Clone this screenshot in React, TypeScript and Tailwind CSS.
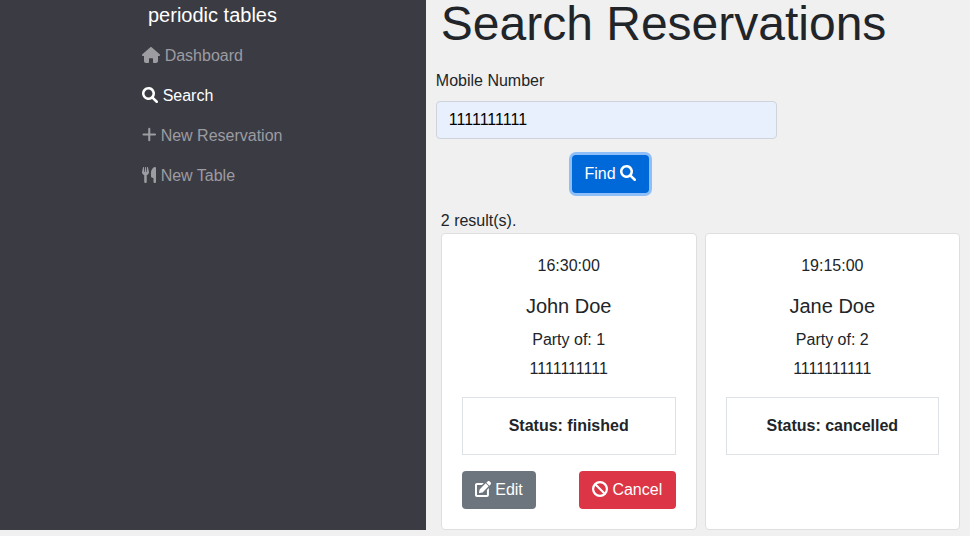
import type { ReactNode } from "react";

function Glyph({ box, className, children }: { box: string; className: string; children: ReactNode }) {
  return (
    <svg viewBox={box} fill="currentColor" aria-hidden="true" className={`inline-block align-[-2px] ${className}`}>
      {children}
    </svg>
  );
}

const HouseIcon = () => (
  <Glyph box="0 0 576 512" className="h-4 w-[18px]">
    <path d="M309 8c-12-10-30-10-42 0L11 232c-22 20-8 56 21 56h32v160c0 35 29 64 64 64h64c18 0 32-14 32-32V376c0-9 7-16 16-16h96c9 0 16 7 16 16v104c0 18 14 32 32 32h64c35 0 64-29 64-64V288h32c29 0 43-36 21-56z" />
  </Glyph>
);

const SearchIcon = () => (
  <Glyph box="0 0 512 512" className="size-4">
    <path d="M500.3 443.7l-119.7-119.7c27.22-40.41 40.65-90.9 33.46-144.7C401.8 87.79 326.8 13.32 235.2 1.723C99.01-15.51-15.51 99.01 1.724 235.2c11.6 91.64 86.08 166.7 177.6 178.9c53.8 7.189 104.3-6.236 144.7-33.46l119.7 119.7c15.62 15.62 40.95 15.62 56.57 0C515.9 484.7 515.9 459.3 500.3 443.7zM79.1 208c0-70.58 57.42-128 128-128s128 57.42 128 128c0 70.58-57.42 128-128 128S79.1 278.6 79.1 208z" />
  </Glyph>
);

const PlusIcon = () => (
  <Glyph box="0 0 448 512" className="h-4 w-3.5">
    <path d="M48 240h368M232 56v368" fill="none" stroke="currentColor" strokeWidth="66" strokeLinecap="round" />
  </Glyph>
);

const UtensilsIcon = () => (
  <Glyph box="0 0 448 512" className="h-4 w-3.5">
    <path d="M221.6 148.7C224.7 161.3 224.8 174.5 222.1 187.2C219.3 199.1 213.6 211.9 205.6 222.1C191.1 238.6 173 249.1 151.1 254.1V472C151.1 482.6 147.8 492.8 140.3 500.3C132.8 507.8 122.6 512 111.1 512C101.4 512 91.22 507.8 83.71 500.3C76.21 492.8 71.1 482.6 71.1 472V254.1C50.96 250.1 31.96 238.9 18.3 222.4C10.19 212.2 4.529 200.3 1.755 187.5C-1.019 174.7-.8315 161.5 2.303 148.8L32.51 12.45C33.36 8.598 35.61 5.197 38.82 2.9C42.02 .602 45.97-.4297 49.89 .0026C53.82 .4302 57.46 2.303 60.1 5.259C62.74 8.214 64.18 12.04 64.16 16V160H81.53L98.62 11.91C99.02 8.635 100.6 5.621 103.1 3.434C105.5 1.248 108.7 .0401 111.1 .0401C115.3 .0401 118.5 1.248 120.9 3.434C123.4 5.621 124.1 8.635 125.4 11.91L142.5 160H159.1V16C159.1 12.07 161.4 8.268 163.1 5.317C166.6 2.366 170.2 .474 174.1 .0026C178-.4262 181.1 .619 185.2 2.936C188.4 5.253 190.6 8.677 191.5 12.55L221.6 148.7zM448 472C448 482.6 443.8 492.8 436.3 500.3C428.8 507.8 418.6 512 408 512C397.4 512 387.2 507.8 379.7 500.3C372.2 492.8 368 482.6 368 472V352H351.2C342.8 352 334.4 350.3 326.6 347.1C318.9 343.8 311.8 339.1 305.8 333.1C299.9 327.1 295.2 320 291.1 312.2C288.8 304.4 287.2 296 287.2 287.6L287.1 173.8C288 136.9 299.1 100.8 319.8 70.28C340.5 39.71 369.8 16.05 404.1 2.339C408.1 .401 414.2-.3202 419.4 .2391C424.6 .7982 429.6 2.62 433.9 5.546C438.2 8.472 441.8 12.41 444.2 17.03C446.7 21.64 447.1 26.78 448 32V472z" />
  </Glyph>
);

const EditIcon = () => (
  <Glyph box="0 0 512 512" className="size-4">
    <path d="M383.1 448H63.1V128h156.1l64-64H63.1C28.65 64 0 92.65 0 128v320c0 35.35 28.65 64 63.1 64h319.1c35.34 0 63.1-28.65 63.1-64l-.0039-220.1l-63.1 63.99V448zM497.9 42.19l-28.13-28.14c-18.75-18.75-49.16-18.75-67.91 0l-38.62 38.63l96.03 96.03l38.62-38.63C516.7 91.33 516.7 60.94 497.9 42.19zM147.3 274.4l-19.04 95.22c-1.678 8.394 5.725 15.8 14.12 14.12l95.23-19.04c4.646-.9297 8.912-3.213 12.26-6.562l186.8-186.8l-96.03-96.03L153.8 262.2C150.5 265.5 148.2 269.8 147.3 274.4z" />
  </Glyph>
);

const BanIcon = () => (
  <Glyph box="0 0 512 512" className="size-4">
    <g fill="none" stroke="currentColor" strokeWidth="70">
      <circle cx="256" cy="256" r="221" />
      <path d="M104 104l304 304" />
    </g>
  </Glyph>
);

const links = [
  { label: "Dashboard", Icon: HouseIcon, active: false },
  { label: "Search", Icon: SearchIcon, active: true },
  { label: "New Reservation", Icon: PlusIcon, active: false },
  { label: "New Table", Icon: UtensilsIcon, active: false },
];

const reservations = [
  { time: "16:30:00", name: "John Doe", people: 1, phone: "1111111111", status: "finished", actions: true },
  { time: "19:15:00", name: "Jane Doe", people: 2, phone: "1111111111", status: "cancelled", actions: false },
];

function Sidebar() {
  return (
    <aside className="h-[530px] w-[426px] shrink-0 bg-[#3b3b44]">
      <div className="mb-1.5 pl-[148px] text-xl leading-[30px] text-white">periodic tables</div>
      <nav className="pl-[142.2px]">
        {links.map(({ label, Icon, active }) => (
          <a key={label} className={active ? "block py-2 text-white" : "block py-2 text-[#9c9ca1]"}>
            <Icon /> {label}
          </a>
        ))}
      </nav>
    </aside>
  );
}

function Card({ r }: { r: (typeof reservations)[number] }) {
  return (
    <article className="flex flex-col rounded border border-[#dfdfdf] bg-white px-5 pt-5 text-center">
      <p>{r.time}</p>
      <h5 className="mt-4 text-xl leading-6">{r.name}</h5>
      <p className="mt-2.5">Party of: {r.people}</p>
      <p className="mt-[5px]">{r.phone}</p>
      <p className="mt-4 border border-[#dee2e6] py-4 font-bold">Status: {r.status}</p>
      {r.actions && (
        <div className="mt-4 flex justify-between text-white">
          <button className="h-[38px] rounded bg-[#6c757d] px-[13px]">
            <EditIcon /> Edit
          </button>
          <button className="h-[38px] w-[97px] rounded bg-[#dc3545]">
            <BanIcon /> Cancel
          </button>
        </div>
      )}
    </article>
  );
}

export default function App() {
  return (
    <div className="flex h-[536px] w-[970px] bg-[#f0f0f0] font-['Liberation_Sans',Arial,sans-serif] text-base leading-6 text-[#212529]">
      <Sidebar />
      <main className="flex-1 pl-[9.8px]">
        <h1 className="mb-[22px] pl-[5px] text-[48px] leading-[47px]">Search Reservations</h1>
        <form className="flex w-[341px] flex-col">
          <label>Mobile Number</label>
          <input
            readOnly
            value="1111111111"
            className="mt-2 h-[38px] w-full rounded border border-[#ced4da] bg-[#e8f0fe] px-3 text-black outline-none"
          />
          <button
            type="button"
            className="mt-4 ml-[136px] h-[38px] w-[77px] rounded bg-[#0069d9] text-white ring-3 ring-[#8ebff8]"
          >
            Find <SearchIcon />
          </button>
        </form>
        <p className="mt-4 pl-[5px]">2 result(s).</p>
        <section className="ml-[5px] grid h-[297px] grid-cols-[255.8px_255.4px] gap-2">
          {reservations.map((r) => (
            <Card key={r.name} r={r} />
          ))}
        </section>
      </main>
    </div>
  );
}
